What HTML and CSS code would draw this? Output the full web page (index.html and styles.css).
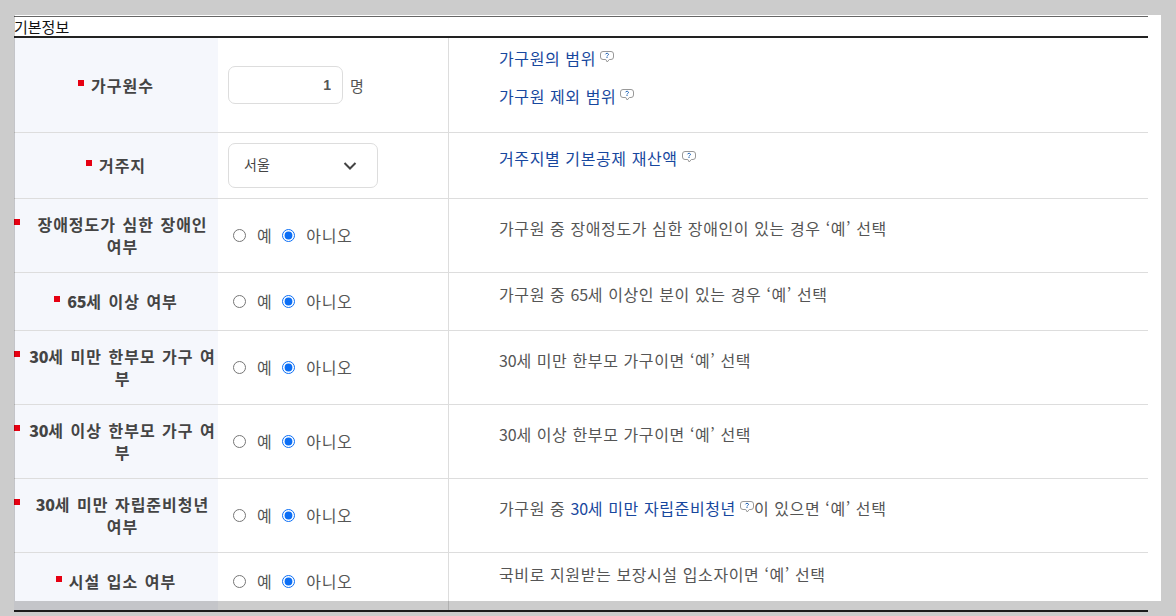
FILE: index.html
```html
<!DOCTYPE html>
<html lang="ko">
<head>
<meta charset="utf-8">
<title>기본정보</title>
<link rel="stylesheet" href="styles.css">
</head>
<body>
<svg class="defs" width="0" height="0" aria-hidden="true">
  <symbol id="help" viewBox="0 0 14 12">
    <path d="M3 .5h8a2.5 2.5 0 0 1 2.5 2.5v3A2.5 2.5 0 0 1 11 8.500H9.300L7.200 11 5.800 8.500H3A2.500 2.500 0 0 1 .5 6V3A2.500 2.500 0 0 1 3 .5z" fill="#fff" stroke="#999"/>
    <path d="M5.500 3.300c.2-.7.800-1 1.500-1 .9 0 1.500.5 1.500 1.200 0 .9-1.500 1-1.500 1.900" fill="none" stroke="#1a5fb4" stroke-width="1"/>
    <rect x="6.500" y="6" width="1" height="1" fill="#1a5fb4"/>
  </symbol>
</svg>
<table class="form">
  <caption>기본정보</caption>
  <colgroup><col class="c1"><col class="c2"><col class="c3"></colgroup>
  <tbody>
    <tr>
      <th><div class="label"><i class="req"></i><span>가구원수</span></div></th>
      <td class="field"><input class="num" type="text" value="1"> <span class="unit">명</span></td>
      <td class="info">
        <p><a href="#">가구원의 범위<svg class="help"><use href="#help"/></svg></a></p>
        <p><a href="#">가구원 제외 범위<svg class="help"><use href="#help"/></svg></a></p>
      </td>
    </tr>
    <tr>
      <th><div class="label"><i class="req"></i><span>거주지</span></div></th>
      <td class="field">
        <div class="select">서울
          <svg class="chev" width="14" height="8" viewBox="0 0 14 8"><path d="M1.500 1 7 6.500 12.500 1" fill="none" stroke="#444" stroke-width="2"/></svg>
        </div>
      </td>
      <td class="info"><p><a href="#">거주지별 기본공제 재산액<svg class="help"><use href="#help"/></svg></a></p></td>
    </tr>
    <tr>
      <th><div class="label"><i class="req"></i><span>장애정도가 심한 장애인 여부</span></div></th>
      <td class="field"><div class="radios"><input type="radio" name="r1"><label>예</label><input type="radio" name="r1" checked><label>아니오</label></div></td>
      <td class="info"><p>가구원 중 장애정도가 심한 장애인이 있는 경우 ‘예’ 선택</p></td>
    </tr>
    <tr>
      <th><div class="label"><i class="req"></i><span><b class="d">65</b>세 이상 여부</span></div></th>
      <td class="field"><div class="radios"><input type="radio" name="r2"><label>예</label><input type="radio" name="r2" checked><label>아니오</label></div></td>
      <td class="info"><p>가구원 중 <span class="d">65</span>세 이상인 분이 있는 경우 ‘예’ 선택</p></td>
    </tr>
    <tr>
      <th><div class="label"><i class="req"></i><span><b class="d">30</b>세 미만 한부모 가구 여부</span></div></th>
      <td class="field"><div class="radios"><input type="radio" name="r3"><label>예</label><input type="radio" name="r3" checked><label>아니오</label></div></td>
      <td class="info"><p><span class="d">30</span>세 미만 한부모 가구이면 ‘예’ 선택</p></td>
    </tr>
    <tr>
      <th><div class="label"><i class="req"></i><span><b class="d">30</b>세 이상 한부모 가구 여부</span></div></th>
      <td class="field"><div class="radios"><input type="radio" name="r4"><label>예</label><input type="radio" name="r4" checked><label>아니오</label></div></td>
      <td class="info"><p><span class="d">30</span>세 이상 한부모 가구이면 ‘예’ 선택</p></td>
    </tr>
    <tr>
      <th><div class="label"><i class="req"></i><span><b class="d">30</b>세 미만 자립준비청년 여부</span></div></th>
      <td class="field"><div class="radios"><input type="radio" name="r5"><label>예</label><input type="radio" name="r5" checked><label>아니오</label></div></td>
      <td class="info"><p>가구원 중 <a href="#"><span class="d">30</span>세 미만 자립준비청년<svg class="help"><use href="#help"/></svg></a>이 있으면 ‘예’ 선택</p></td>
    </tr>
    <tr>
      <th><div class="label"><i class="req"></i><span>시설 입소 여부</span></div></th>
      <td class="field"><div class="radios"><input type="radio" name="r6"><label>예</label><input type="radio" name="r6" checked><label>아니오</label></div></td>
      <td class="info"><p>국비로 지원받는 보장시설 입소자이면 ‘예’ 선택</p></td>
    </tr>
  </tbody>
</table>
<div class="backdrop"></div>
</body>
</html>
```
FILE: styles.css
```css
html, body {
  margin: 0;
  height: 100%;
  overflow: hidden;
  background: #fff;
}
body {
  padding: 16px 0 0 14px;
  box-sizing: border-box;
  font-family: "Noto Sans CJK KR", "Noto Sans", sans-serif;
  font-size: 16px;
  letter-spacing: .6px;
  color: #555;
}
.defs { position: absolute; }
.backdrop {
  position: fixed;
  inset: 0;
  border-style: solid;
  border-color: rgba(0, 0, 0, .2);
  border-width: 15px;
  pointer-events: none;
}
.form {
  width: 1134px;
  table-layout: fixed;
  border-collapse: collapse;
  border-bottom: 2px solid #222;
}
.form caption {
  text-align: left;
  color: #111;
  font-size: 15px;
  letter-spacing: 0;
  line-height: 19px;
  height: 19px;
  border-top: 1px solid #666;
}
.form tbody { border-top: 2px solid #222; }
.c1 { width: 204px; }
.c2 { width: 230px; }
tr { border-bottom: 1px solid #ddd; }
tr:last-child { border-bottom: 0; }
th {
  background: #f5f7fc;
  padding: 14px 0 15px;
  font-weight: 700;
  font-size: 16px;
  letter-spacing: 1px;
  word-spacing: 1px;
  line-height: 22px;
  color: #444;
}
.d { letter-spacing: -.2px; }
.label { display: flex; justify-content: center; }
.req {
  flex: none;
  width: 6px;
  height: 6px;
  margin: 6px 7px 0 0;
  background: #e60012;
}
.label span { text-align: center; }
.field { padding: 10px 0 10px 10px; border-right: 1px solid #ddd; }
.info { padding: 10px 0 10px 50.500px; line-height: 22px; }
tr:first-child .info { padding-top: 9px; padding-bottom: 9px; }
.info p { margin: 0 0 15px; }
.info a { color: #17479e; text-decoration: none; }
.help { width: 14px; height: 12px; margin: 0 0 7px 4px; vertical-align: middle; }
.num {
  box-sizing: border-box;
  width: 115px;
  height: 38px;
  padding: 0 11px;
  border: 1px solid #ddd;
  border-radius: 7px;
  text-align: right;
  font: 700 14px "Liberation Sans", sans-serif;
  color: #555;
  vertical-align: middle;
}
.unit { margin-left: 2px; font-size: 15px; vertical-align: middle; }
.select {
  box-sizing: border-box;
  display: flex;
  align-items: center;
  justify-content: space-between;
  width: 150px;
  height: 45px;
  padding: 0 20px 3px 15px;
  border: 1px solid #ddd;
  border-radius: 7px;
  font-size: 14px;
  letter-spacing: 0;
  color: #444;
}
.chev { margin-top: 3px; }
.radios { display: flex; align-items: center; }
.radios input {
  width: 13px;
  height: 13px;
  margin: 0 11px 0 5px;
  accent-color: #0b6ef5;
}
.radios label { margin: -2px 5px 0 0; }
```
